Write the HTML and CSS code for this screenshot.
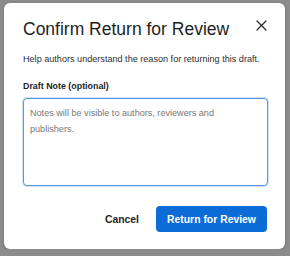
FILE: index.html
```html
<!DOCTYPE html>
<html lang="en">
<head>
    <meta charset="UTF-8">
    <meta name="viewport" content="width=device-width, initial-scale=1.0">
    <title>Confirm Return for Review</title>
    <link rel="stylesheet" href="styles.css">
</head>
<body>
    <div class="backdrop">
        <div class="modal">
            <div class="modal-header">
                <h2>Confirm Return for Review</h2>
                <button class="close-btn" aria-label="Close">
                    <svg width="11" height="11" viewBox="0 0 11 11">
                        <path d="M1 1 L10 10 M10 1 L1 10" stroke="#2b2b2b" stroke-width="1.3" fill="none" stroke-linecap="round"/>
                    </svg>
                </button>
            </div>
            <p class="help">Help authors understand the reason for returning this draft.</p>
            <label class="label" for="note">Draft Note (optional)</label>
            <textarea id="note" placeholder="Notes will be visible to authors, reviewers and publishers."></textarea>
            <div class="actions">
                <button class="cancel">Cancel</button>
                <button class="primary">Return for Review</button>
            </div>
        </div>
    </div>
</body>
</html>
```

FILE: styles.css
```css
body {
    margin: 0;
    padding: 0;
    background: #8c8c8c;
    font-family: "Liberation Sans", Arial, sans-serif;
    overflow: hidden;
}
.backdrop {
    padding-top: 3px;
    padding-left: 4px;
}
.modal {
    width: 281px;
    height: 246px;
    box-sizing: border-box;
    background: #ffffff;
    border-radius: 6px;
    padding: 16px 18px 0 19px;
    box-shadow: 0 1px 3px rgba(0, 0, 0, 0.25);
}
.modal-header {
    display: flex;
    justify-content: space-between;
    align-items: flex-start;
}
.modal-header h2 {
    margin: 0;
    font-size: 17.5px;
    line-height: 20px;
    font-weight: normal;
    color: #1e1e1e;
}
.close-btn {
    border: none;
    background: none;
    padding: 0;
    margin-top: 1px;
    margin-right: 0;
    width: 11px;
    height: 11px;
    display: flex;
}
.help {
    margin: 14px 0 0 0;
    font-size: 9.1px;
    line-height: 12px;
    color: #2e2e2e;
}
.label {
    display: block;
    margin-top: 15px;
    font-size: 8.9px;
    line-height: 12px;
    font-weight: bold;
    color: #1e1e1e;
}
textarea {
    display: block;
    margin-top: 6px;
    width: 245px;
    height: 88px;
    box-sizing: border-box;
    border: 1px solid #5a98e2;
    border-radius: 4px;
    box-shadow: 0 0 0 1px rgba(90, 152, 226, 0.3);
    padding: 6px 22px 6px 6px;
    font-family: "Liberation Sans", Arial, sans-serif;
    font-size: 9.1px;
    line-height: 16px;
    resize: none;
    outline: none;
}
textarea::placeholder {
    color: #787878;
}
.actions {
    display: flex;
    justify-content: flex-end;
    align-items: center;
    gap: 17px;
    margin-top: 20px;
}
.cancel {
    border: none;
    background: none;
    padding: 0;
    font-family: "Liberation Sans", Arial, sans-serif;
    font-size: 10.4px;
    font-weight: bold;
    color: #1e1e1e;
}
.primary {
    width: 111px;
    height: 26px;
    border: none;
    border-radius: 4px;
    background: #0b6cd8;
    color: #ffffff;
    font-family: "Liberation Sans", Arial, sans-serif;
    font-size: 10.4px;
    font-weight: bold;
    margin-right: 0;
}
```
